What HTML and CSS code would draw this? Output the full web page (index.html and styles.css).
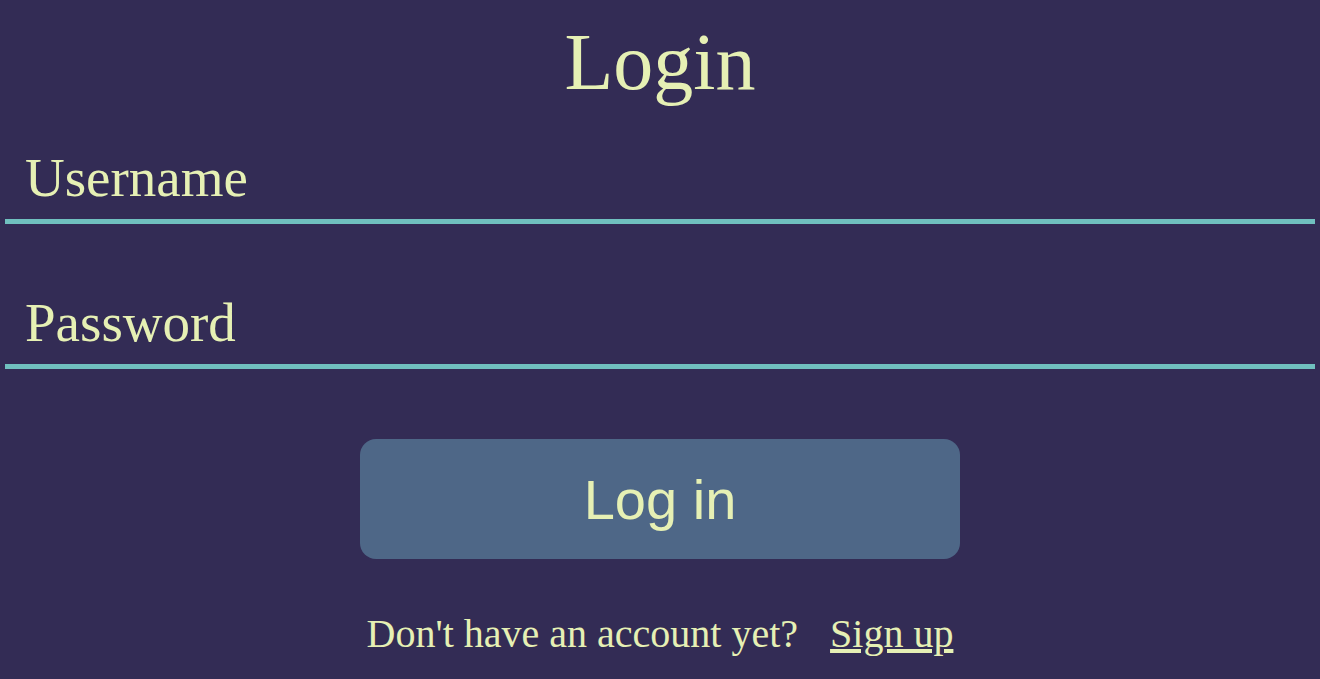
FILE: index.html
```html
<!DOCTYPE html>
<html lang="en">
<head>
<meta charset="utf-8">
<title>Login</title>
<link rel="stylesheet" href="styles.css">
</head>
<body>
<main class="page">
  <h1 class="title">Login</h1>
  <form class="form">
    <input class="field" type="text" placeholder="Username">
    <input class="field field-second" type="password" placeholder="Password">
    <button class="btn" type="button">Log in</button>
  </form>
  <p class="foot">Don't have an account yet? <a class="link" href="#">Sign up</a></p>
</main>
</body>
</html>
```

FILE: styles.css
```css
html, body {
  margin: 0;
  padding: 0;
  background: #332c55;
}
.page {
  display: flex;
  flex-direction: column;
  align-items: center;
  padding: 16px 5px 0;
  font-family: "Liberation Serif", "Times New Roman", serif;
  color: #e6f0b4;
}
.title {
  margin: 0;
  font-size: 80px;
  font-weight: normal;
  line-height: 92px;
}
.form {
  display: flex;
  flex-direction: column;
  align-items: center;
  width: 100%;
  margin-top: 28px;
}
.field {
  box-sizing: border-box;
  width: 100%;
  background: transparent;
  border: none;
  border-bottom: 5px solid #70c0bf;
  outline: none;
  padding: 10px 20px 11px;
  font-family: "Liberation Serif", "Times New Roman", serif;
  font-size: 55px;
  line-height: 62px;
  height: 88px;
  color: #e6f0b4;
}
.field::placeholder {
  color: #e6f0b4;
  opacity: 1;
}
.field-second {
  margin-top: 57px;
}
.btn {
  margin-top: 70px;
  width: 600px;
  height: 120px;
  border: none;
  border-radius: 16px;
  background: #4e6787;
  color: #e6f0b4;
  font-family: "Liberation Sans", Arial, sans-serif;
  font-size: 56px;
  cursor: pointer;
}
.foot {
  margin: 52px 0 0;
  font-size: 40px;
  line-height: 46px;
}
.link {
  color: #e6f0b4;
  margin-left: 22px;
}
```
